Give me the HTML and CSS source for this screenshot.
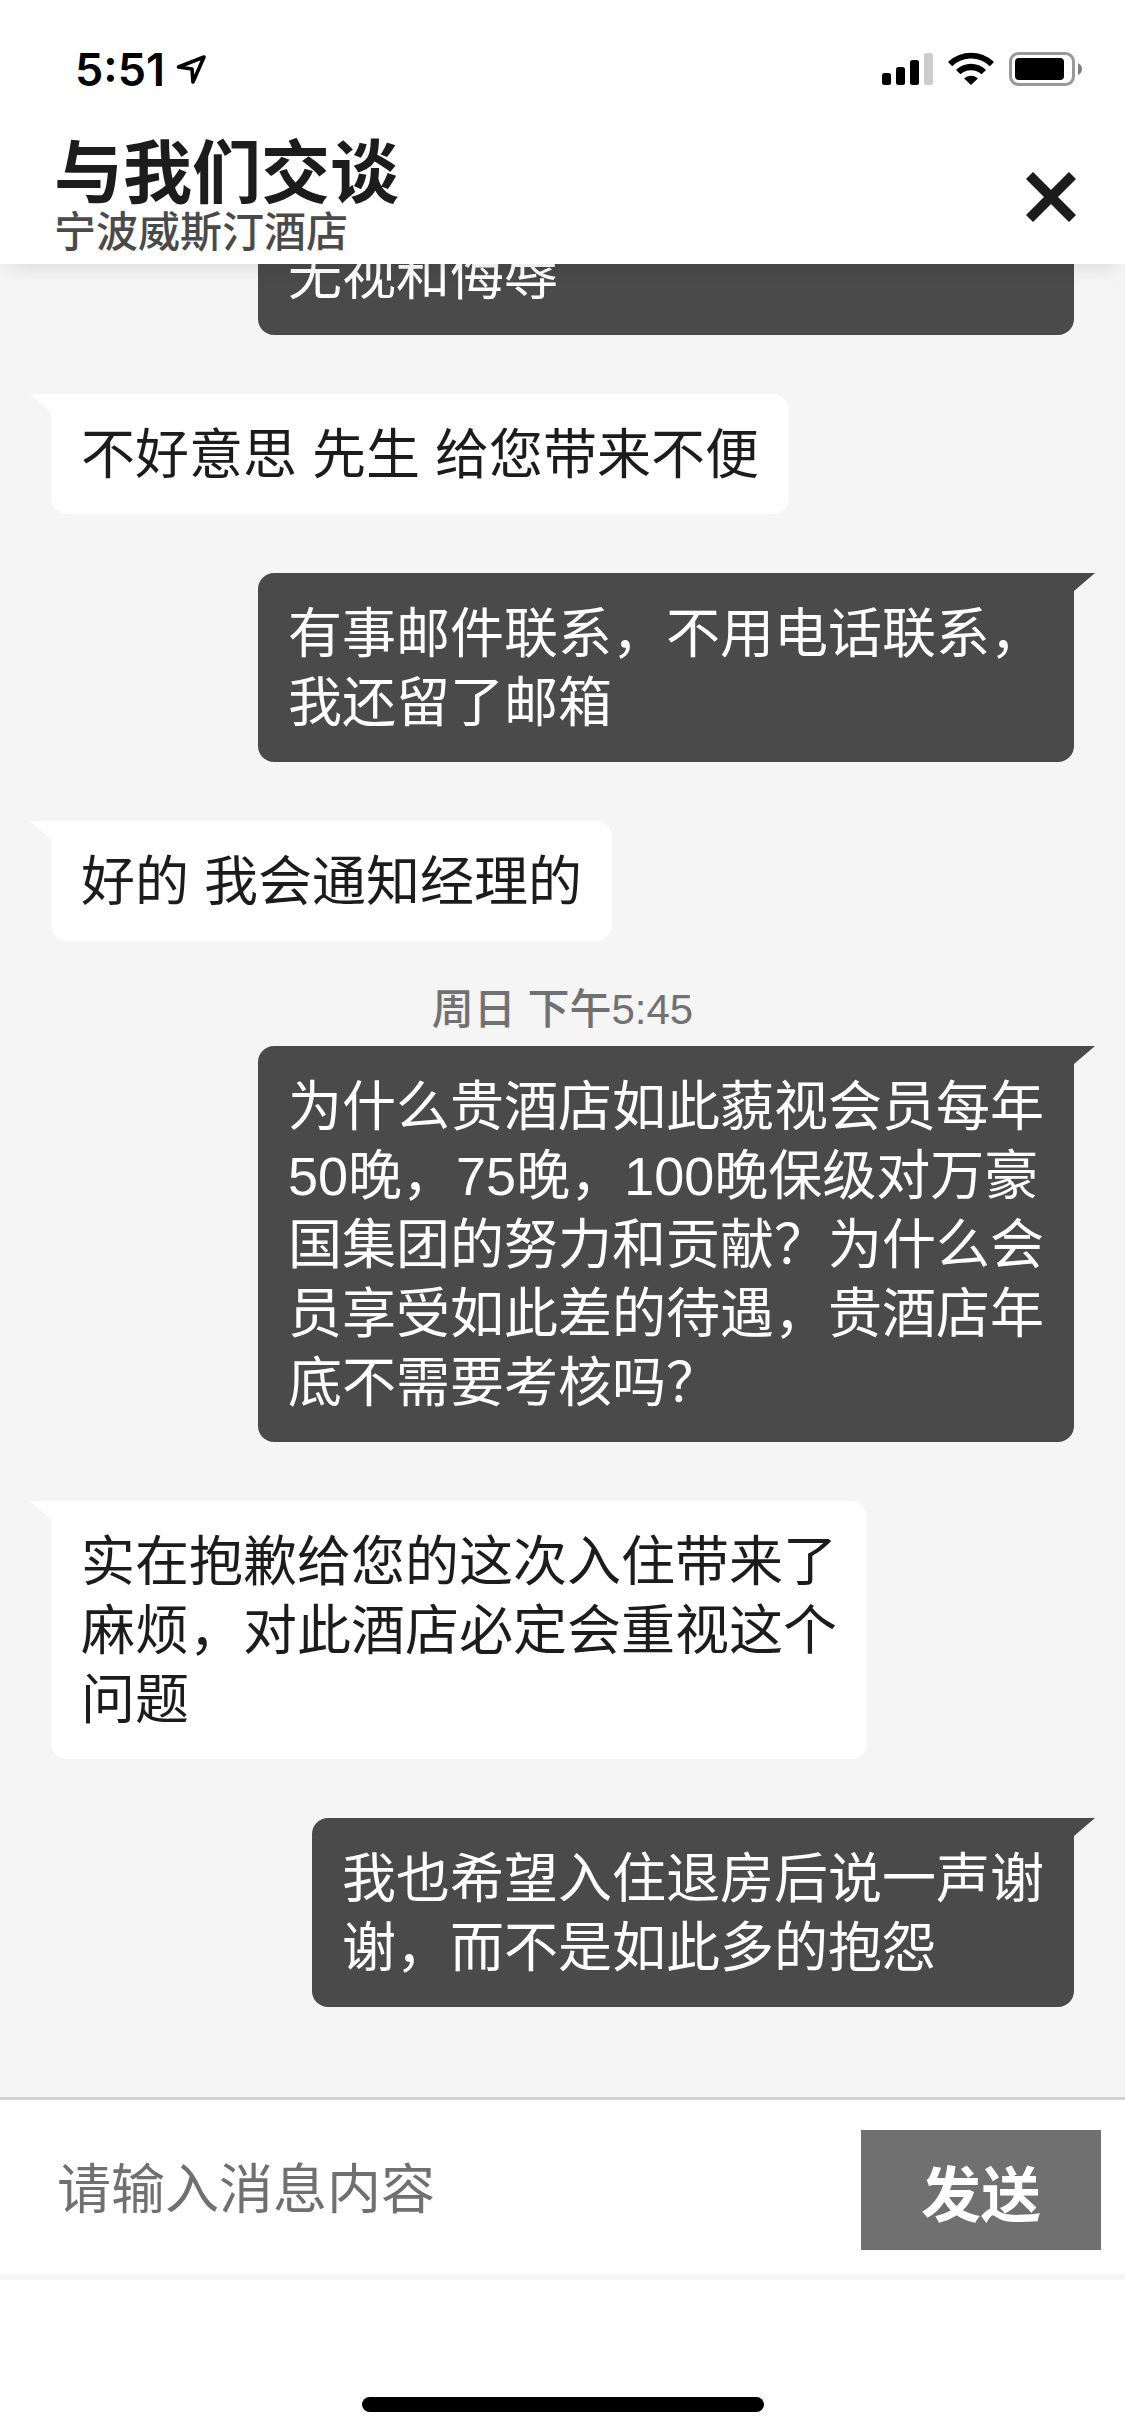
FILE: index.html
```html
<!DOCTYPE html>
<html lang="zh-CN">
<head>
  <meta charset="UTF-8">
  <meta name="viewport" content="width=device-width, initial-scale=1.0">
  <title>与我们交谈</title>
  <link rel="stylesheet" href="styles.css">
</head>
<body>
  <header class="header">
    <div class="status-bar">
      <span class="time">5:51</span>
      <svg class="location" width="31" height="31" viewBox="0 0 31 31" aria-hidden="true">
        <path d="M28 3 L2.500 13 L16 15 L17 28 Z" fill="none" stroke="#000" stroke-width="3.600" stroke-linejoin="round" />
      </svg>
      <svg class="indicators" width="201" height="34" viewBox="0 0 201 34" aria-hidden="true">
        <!-- signal -->
        <rect x="0" y="21" width="9" height="12" rx="2.5" />
        <rect x="14" y="15" width="9" height="18" rx="2.5" />
        <rect x="28" y="8" width="9" height="25" rx="2.5" />
        <rect x="42" y="1" width="9" height="32" rx="2.5" fill="#ccc" />
        <!-- wifi -->
        <path d="M66.5 9.5 A33 33 0 0 1 111.5 9.5 Q112 10 111.5 10.5 L107.8 14.2 A27 27 0 0 0 70.2 14.2 L66.5 10.5 Q66 10 66.5 9.5 Z" />
        <path d="M74.5 17.5 A21 21 0 0 1 103.5 17.5 Q104 18 103.5 18.5 L99.5 22.3 A15.5 15.5 0 0 0 78.5 22.3 L74.5 18.5 Q74 18 74.5 17.5 Z" />
        <path d="M82.6 26 A10 10 0 0 1 95.4 26 Q96 26.5 95.4 27 L89 33 L82.6 27 Q82 26.5 82.6 26 Z" />
        <!-- battery -->
        <rect x="128.5" y="1.5" width="63" height="31" rx="8" fill="none" stroke="#999" stroke-width="3" />
        <rect x="133" y="6" width="49" height="22" rx="4" />
        <path d="M196 11 Q200 13 200 17 Q200 21 196 23 Z" fill="#808080" />
      </svg>
    </div>
    <div class="title-bar">
      <div>
        <h1 class="title">与我们交谈</h1>
        <p class="hotel">宁波威斯汀酒店</p>
      </div>
      <button class="close" type="button" aria-label="关闭">
        <svg width="50" height="50" viewBox="0 0 50 50">
          <path d="M3.5 3.5 L46.5 46.5 M46.5 3.5 L3.5 46.5" stroke="#1c1c1c" stroke-width="10" />
        </svg>
      </button>
    </div>
  </header>

  <main class="messages">
    <p class="bubble sent full">无视和侮辱</p>
    <p class="bubble received">不好意思 先生 给您带来不便</p>
    <p class="bubble sent">有事邮件联系，不用电话联系，我还留了邮箱</p>
    <p class="bubble received">好的 我会通知经理的</p>
    <time class="timestamp">周日 下午5:45</time>
    <p class="bubble sent">为什么贵酒店如此藐视会员每年50晚，75晚，100晚保级对万豪国集团的努力和贡献？为什么会员享受如此差的待遇，贵酒店年底不需要考核吗？</p>
    <p class="bubble received">实在抱歉给您的这次入住带来了麻烦，对此酒店必定会重视这个问题</p>
    <p class="bubble sent narrow">我也希望入住退房后说一声谢谢，而不是如此多的抱怨</p>
  </main>

  <form class="composer">
    <input class="message-input" type="text" placeholder="请输入消息内容" aria-label="请输入消息内容">
    <button class="send" type="button">发送</button>
  </form>

  <footer class="home-area">
    <div class="home-indicator"></div>
  </footer>
</body>
</html>
```
FILE: styles.css
```css
* {
  box-sizing: border-box;
}

body {
  margin: 0;
  height: 100vh;
  display: flex;
  flex-direction: column;
  background-color: #fff;
  color: #1c1c1c;
  font-family: "Liberation Sans", "Noto Sans CJK SC", sans-serif;
}

h1, p {
  margin: 0;
}

button {
  border: none;
  padding: 0;
  font-family: inherit;
  cursor: pointer;
}

/* Header */
.header {
  position: relative;
  z-index: 1;
  flex: none;
  background-color: #fff;
  box-shadow: 0 12px 18px -9px rgba(0, 0, 0, 0.12);
}

.status-bar {
  display: flex;
  align-items: center;
  height: 138px;
  padding: 0 42px 0 75px;
}

.time {
  color: #000;
  font-family: Inter, sans-serif;
  font-size: 45px;
  font-weight: 600;
}

.location {
  margin-left: 11px;
}

.indicators {
  margin-left: auto;
}

.title-bar {
  display: flex;
  align-items: center;
  justify-content: space-between;
  height: 126px;
  padding: 0 49px 8px 54px;
}

.title {
  padding-top: 3px;
  font-size: 69px;
  font-weight: 700;
  line-height: 69px;
}

.hotel {
  color: #4a4a4a;
  font-size: 42px;
  font-weight: 500;
  line-height: 48px;
}

.close {
  display: flex;
  background: none;
}

/* Messages */
.messages {
  flex: 1;
  min-height: 0;
  display: flex;
  flex-direction: column;
  justify-content: flex-end;
  gap: 59px;
  padding: 0 51px 90px;
  overflow: hidden;
  background-color: #f5f5f5;
}

.bubble {
  position: relative;
  flex: none;
  max-width: calc(100% - 207px);
  padding: 27px 30px 24px;
  border-radius: 16px;
  font-size: 54px;
  line-height: 69px;
}

.bubble.full {
  width: 100%;
}

.bubble.narrow {
  max-width: calc(100% - 261px);
}

.bubble::before {
  content: "";
  position: absolute;
  top: 0;
  width: 41px;
  height: 18px;
}

.received {
  align-self: flex-start;
  background-color: #fff;
  border-top-left-radius: 0;
}

.received::before {
  left: -21px;
  background-color: #fff;
  clip-path: polygon(0 0, 100% 0, 100% 100%, 21px 100%);
}

.sent {
  align-self: flex-end;
  background-color: #4a4a4a;
  color: #fff;
  border-top-right-radius: 0;
}

.sent::before {
  right: -21px;
  background-color: #4a4a4a;
  clip-path: polygon(0 0, 100% 0, 20px 100%, 0 100%);
}

.timestamp {
  flex: none;
  margin: -14px 0 -47px;
  color: #717171;
  font-size: 42px;
  font-weight: 500;
  line-height: 48px;
  text-align: center;
}

/* Composer */
.composer {
  flex: none;
  display: flex;
  align-items: center;
  padding: 30px 24px 24px 57px;
  border-top: 3px solid #d2d2d2;
  border-bottom: 6px solid #f5f5f5;
}

.message-input {
  flex: 1;
  min-width: 0;
  height: 120px;
  padding: 0;
  border: none;
  outline: none;
  background: none;
  color: #1c1c1c;
  font-family: inherit;
  font-size: 54px;
}

.message-input::placeholder {
  color: #707070;
  opacity: 1;
}

.send {
  width: 240px;
  height: 120px;
  background-color: #707070;
  color: #fff;
  font-size: 60px;
  font-weight: 700;
}

/* Home indicator */
.home-area {
  flex: none;
  display: flex;
  align-items: flex-end;
  justify-content: center;
  height: 156px;
  padding-bottom: 24px;
}

.home-indicator {
  width: 402px;
  height: 15px;
  border-radius: 8px;
  background-color: #000;
}
```
